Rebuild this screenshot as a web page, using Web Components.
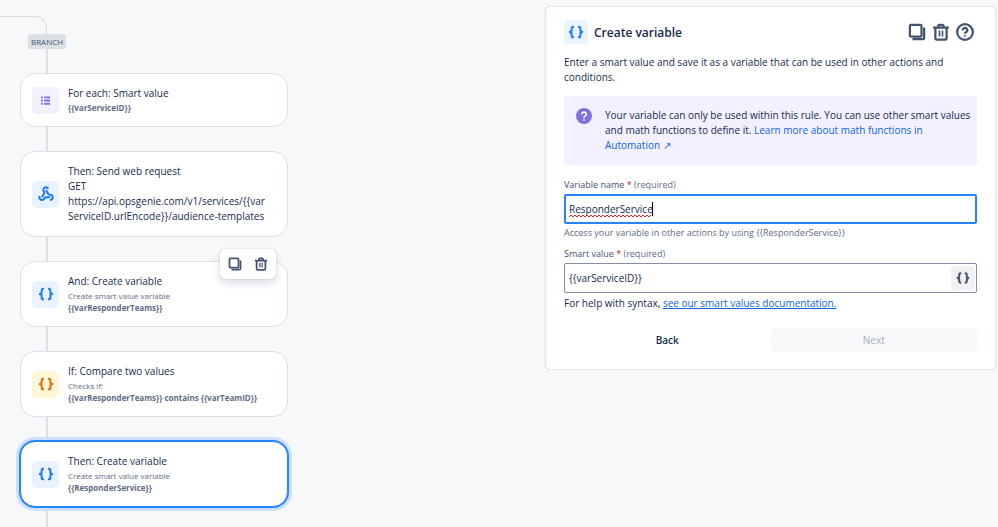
<!DOCTYPE html>
<html lang="en">
<head>
<meta charset="utf-8">
<meta name="viewport" content="width=device-width, initial-scale=1">
<title>Create variable</title>
<style>
  :root {
    --canvas: #f7f8fa;
    --line: #dcdfe4;
    --text: #172b4d;
    --subtle: #5e6c84;
    --icon: #44546f;
    --blue: #2684ff;
    --link: #0c66e4;
  }
  body {
    margin: 0;
    background: var(--canvas);
    color: var(--text);
    font: 10px/15px "Open Sans", "Noto Sans", sans-serif;
  }
</style>
</head>
<body>
<rule-editor></rule-editor>

<script>
const ICONS = {
  braces: '<path d="M9 4H8a2.500 2.500 0 0 0-2.500 2.500v3C5.500 11 4.500 12 1.500 12c3 0 4 1 4 2.500v3A2.500 2.500 0 0 0 8 20h1M15 4h1a2.500 2.500 0 0 1 2.500 2.500v3c0 1.500 1 2.500 4 2.500-3 0-4 1-4 2.500v3A2.500 2.500 0 0 1 16 20h-1"/>',
  list: '<path d="M2 5h4M2 12h4M2 19h4M9 5h13M9 12h13M9 19h13"/>',
  webhook: '<path d="M18 17h-6c-1.100 0-1.950.94-2.480 1.900A4 4 0 0 1 2 17c.01-.7.2-1.400.57-2M6 17l3.130-5.780c.53-.97.1-2.180-.5-3.100a4 4 0 1 1 6.890-4.060M12 6l3.130 5.730C15.660 12.700 16.900 13 18 13a4 4 0 0 1 0 8"/>',
  copy: '<rect x="2.500" y="2.500" width="15.500" height="15.500" rx="1.500"/><path d="M21.500 6v13.500a2 2 0 0 1-2 2H6"/>',
  trash: '<path d="M1.500 6h21M8.500 5.500V4a1.500 1.500 0 0 1 1.500-1.500h4A1.500 1.500 0 0 1 15.500 4v1.500M4.500 6v14a2 2 0 0 0 2 2h11a2 2 0 0 0 2-2V6"/><path stroke-width="2.200" d="M10 10v8M14 10v8"/>',
  help: '<circle cx="12" cy="12" r="10.500"/><path d="M9 9.800a3 3 0 1 1 4.500 2.400c-1 .6-1.500 1-1.500 2"/><path d="M12 16.300v1.800"/>',
  helpSolid: '<circle cx="12" cy="12" r="12" fill="currentColor" stroke="none"/><g stroke="#fff"><path d="M8.700 9.500a3.300 3.300 0 1 1 5 2.700c-1.200.7-1.700 1.100-1.700 2.300"/><path d="M12 17v2"/></g>'
};

class UiIcon extends HTMLElement {
  constructor() {
    super();
    this.attachShadow({ mode: 'open' });
  }
  connectedCallback() {
    this.shadowRoot.innerHTML = `
      <style>
        :host { display: block; flex: none; width: 16px; height: 16px; }
        svg { display: block; width: 100%; height: 100%; }
      </style>
      <svg viewBox="0 0 24 24" fill="none" stroke="currentColor" stroke-width="${this.getAttribute('weight') || 2.5}" aria-hidden="true">${ICONS[this.getAttribute('name')]}</svg>
    `;
  }
}
customElements.define('ui-icon', UiIcon);

class IconTile extends HTMLElement {
  constructor() {
    super();
    this.attachShadow({ mode: 'open' });
  }
  connectedCallback() {
    this.shadowRoot.innerHTML = `
      <style>
        :host {
          display: flex;
          flex: none;
          align-items: center;
          justify-content: center;
          width: var(--tile, 27px);
          height: var(--tile, 27px);
          border-radius: 5px;
          background: #e9f2ff;
          color: #1d7afc;
        }
        :host([tone="purple"]) { background: #f3f0ff; color: #8270db; }
        :host([tone="yellow"]) { background: #fff7d6; color: #e56910; }
        :host([tone="purple"]) ui-icon { width: 11px; height: 11px; }
      </style>
      <ui-icon name="${this.getAttribute('icon')}" weight="${this.getAttribute('weight') || 3}"></ui-icon>
    `;
  }
}
customElements.define('icon-tile', IconTile);

class IconButton extends HTMLElement {
  constructor() {
    super();
    this.attachShadow({ mode: 'open' });
  }
  connectedCallback() {
    this.shadowRoot.innerHTML = `
      <style>
        :host { display: block; }
        button {
          display: block;
          padding: 0;
          border: 0;
          background: none;
          color: var(--icon);
          cursor: pointer;
        }
        ui-icon { width: var(--size, 18px); height: var(--size, 18px); }
      </style>
      <button type="button" aria-label="${this.getAttribute('label')}"><ui-icon name="${this.getAttribute('icon')}" weight="3"></ui-icon></button>
    `;
  }
}
customElements.define('icon-button', IconButton);

// One card of the rule chain. Body goes in the default slot, hover actions in "tools".
class FlowStep extends HTMLElement {
  constructor() {
    super();
    this.attachShadow({ mode: 'open' });
  }
  connectedCallback() {
    this.shadowRoot.innerHTML = `
      <style>
        :host {
          position: relative;
          display: flex;
          align-items: center;
          gap: 9px;
          box-sizing: border-box;
          padding: 12px 18px 12px 11px;
          border: 1px solid var(--line);
          border-radius: 15px;
          background: #fff;
        }
        :host([selected]) {
          border-color: var(--blue);
          box-shadow: 0 0 0 1px var(--blue), 0 0 0 4px #cce0ff;
        }
        .text { min-width: 0; }
        h3 { margin: 0; font-size: 10px; font-weight: 400; line-height: 15px; }
        ::slotted(p) {
          margin: 1px 0 0;
          color: var(--subtle);
          font-size: 8px;
          line-height: 12px;
        }
        ::slotted(div) { word-break: break-all; }
        ::slotted(menu) {
          position: absolute;
          top: -13px;
          right: 11px;
          display: flex;
          gap: 12px;
          margin: 0;
          padding: 8px;
          border-radius: 5px;
          background: #fff;
          box-shadow: 0 4px 8px #091e4226, 0 0 1px #091e424f;
        }
      </style>
      <icon-tile icon="${this.getAttribute('icon')}" tone="${this.getAttribute('tone') || 'blue'}" weight="${this.getAttribute('weight') || 3}"></icon-tile>
      <div class="text">
        <h3>${this.getAttribute('heading')}</h3>
        <slot></slot>
      </div>
      <slot name="tools"></slot>
    `;
  }
}
customElements.define('flow-step', FlowStep);

class FlowLink extends HTMLElement {
  constructor() {
    super();
    this.attachShadow({ mode: 'open' });
    this.shadowRoot.innerHTML = `
      <style>
        :host { display: block; width: 2px; height: 24px; margin-left: 26px; background: var(--line); }
      </style>
    `;
  }
}
customElements.define('flow-link', FlowLink);

class FlowChain extends HTMLElement {
  constructor() {
    super();
    this.attachShadow({ mode: 'open' });
    this.shadowRoot.innerHTML = `
      <style>
        :host { display: block; flex: 0 1 288px; min-width: 0; }
        .curve {
          box-sizing: border-box;
          width: 47px;
          height: 18px;
          margin-top: 16px;
          border: solid var(--line);
          border-width: 1px 1px 0 0;
          border-top-right-radius: 12px;
        }
        .steps { padding-left: 20px; }
        .tag {
          display: block;
          width: fit-content;
          margin-left: 8px;
          padding: 0 3px;
          border-radius: 2px;
          background: var(--line);
          color: var(--icon);
          font-size: 8px;
          line-height: 15px;
        }
        b { font-weight: 700; }
        menu icon-button { --size: 14px; }
      </style>
      <div class="curve"></div>
      <div class="steps">
        <span class="tag">BRANCH</span>
        <flow-link></flow-link>
        <flow-step icon="list" tone="purple" weight="4" heading="For each: Smart value">
          <p><b>{{varServiceID}}</b></p>
        </flow-step>
        <flow-link></flow-link>
        <flow-step icon="webhook" heading="Then: Send web request">
          <div>GET<br>https://api.opsgenie.com/v1/services/{{varServiceID.urlEncode}}/audience-templates</div>
        </flow-step>
        <flow-link></flow-link>
        <flow-step icon="braces" heading="And: Create variable">
          <p>Create smart value variable<br><b>{{varResponderTeams}}</b></p>
          <menu slot="tools">
            <icon-button icon="copy" label="Duplicate step"></icon-button>
            <icon-button icon="trash" label="Delete step"></icon-button>
          </menu>
        </flow-step>
        <flow-link></flow-link>
        <flow-step icon="braces" tone="yellow" heading="If: Compare two values">
          <p>Checks if:<br><b>{{varResponderTeams}} contains {{varTeamID}}</b></p>
        </flow-step>
        <flow-link></flow-link>
        <flow-step icon="braces" heading="Then: Create variable" selected>
          <p>Create smart value variable<br><b>{{ResponderService}}</b></p>
        </flow-step>
        <flow-link></flow-link>
      </div>
    `;
  }
}
customElements.define('flow-chain', FlowChain);

class InfoBanner extends HTMLElement {
  constructor() {
    super();
    this.attachShadow({ mode: 'open' });
    this.shadowRoot.innerHTML = `
      <style>
        :host {
          display: flex;
          gap: 13px;
          padding: 12px 4px 12px 12px;
          border-radius: 2px;
          background: #f3f0ff;
        }
        ui-icon { color: #8270db; }
      </style>
      <ui-icon name="helpSolid"></ui-icon>
      <div><slot></slot></div>
    `;
  }
}
customElements.define('info-banner', InfoBanner);

class TextField extends HTMLElement {
  constructor() {
    super();
    this.attachShadow({ mode: 'open' });
  }
  connectedCallback() {
    // squiggle and caret of the field being edited
    const editing = `
      <svg class="squiggle" width="82" height="4" aria-hidden="true">
        <defs><pattern id="wave" width="4" height="4" patternUnits="userSpaceOnUse"><path d="M0 3l2-2 2 2" fill="none" stroke="#e5252a"/></pattern></defs>
        <rect width="82" height="4" fill="url(#wave)"/>
      </svg>
      <span class="caret"></span>`;
    this.shadowRoot.innerHTML = `
      <style>
        :host { display: block; }
        label { display: block; color: var(--icon); font-size: 9px; font-weight: 500; line-height: 12px; }
        label i { color: #ae2a19; font-style: normal; }
        label span { color: var(--subtle); font-weight: 400; }
        .box {
          position: relative;
          display: flex;
          align-items: center;
          height: 30px;
          box-sizing: border-box;
          margin: 3px 0;
          border: 1px solid #8590a2;
          border-radius: 2px;
          background: #fff;
        }
        :host([active]) .box { border: 2px solid var(--blue); }
        input {
          flex: 1;
          min-width: 0;
          padding: 0 0 0 4px;
          border: 0;
          outline: 0;
          background: none;
          color: inherit;
          font: inherit;
        }
        :host([active]) input { padding-left: 3px; }
        .squiggle { position: absolute; left: 3px; bottom: 4px; }
        .caret {
          position: absolute;
          left: 86px;
          width: 1px;
          height: 14px;
          background: #000;
        }
      </style>
      <label for="field">${this.getAttribute('label')}<i> *</i> <span>(required)</span></label>
      <div class="box">
        <input id="field" type="text" value="${this.getAttribute('value')}" spellcheck="false" required>
        ${this.hasAttribute('active') ? editing : ''}
        <slot name="action"></slot>
      </div>
      <slot></slot>
    `;
  }
}
customElements.define('text-field', TextField);

class VariablePanel extends HTMLElement {
  constructor() {
    super();
    this.attachShadow({ mode: 'open' });
    this.shadowRoot.innerHTML = `
      <style>
        :host {
          display: block;
          flex: 0 1 451px;
          min-width: 0;
          box-sizing: border-box;
          margin: 6px 2px;
          padding: 13px 18px 17px;
          border: 1px solid #e4e6ea;
          border-radius: 5px;
          background: #fff;
          box-shadow: 0 0 1px #091e4233;
        }
        header { display: flex; align-items: center; gap: 6px; padding-right: 3px; }
        header icon-tile { --tile: 24px; }
        h2 { flex: 1; margin: 0; padding-top: 2px; font-size: 12px; font-weight: 600; line-height: 16px; }
        .intro { margin: 11px 0; }
        a { color: var(--link); text-decoration: none; }
        form { margin-top: 14px; }
        .hint { margin: 0 0 9px; color: var(--subtle); font-size: 9px; line-height: 12px; }
        .syntax { margin: 0; }
        .syntax a { text-decoration: underline; }
        .insert {
          display: flex;
          align-items: center;
          justify-content: center;
          width: 24px;
          height: 24px;
          margin-right: 1px;
          padding: 0;
          border: 0;
          border-radius: 2px;
          background: #f1f2f4;
          color: var(--icon);
        }
        .insert ui-icon { width: 14px; height: 14px; }
        footer { display: flex; margin-top: 17px; }
        footer button {
          flex: 1;
          height: 24px;
          padding: 0;
          border: 0;
          border-radius: 2px;
          background: none;
          color: inherit;
          font: inherit;
          font-weight: 600;
        }
        footer button:disabled { background: #f7f8f9; color: #a5adba; font-weight: 500; }
      </style>
      <header>
        <icon-tile icon="braces"></icon-tile>
        <h2>Create variable</h2>
        <icon-button icon="copy" label="Duplicate"></icon-button>
        <icon-button icon="trash" label="Delete"></icon-button>
        <icon-button icon="help" label="Help"></icon-button>
      </header>
      <p class="intro">Enter a smart value and save it as a variable that can be used in other actions and conditions.</p>
      <info-banner>Your variable can only be used within this rule. You can use other smart values and math functions to define it. <a href="#math">Learn more about math functions in Automation ↗</a></info-banner>
      <form>
        <text-field label="Variable name" value="ResponderService" active>
          <p class="hint">Access your variable in other actions by using {{ResponderService}}</p>
        </text-field>
        <text-field label="Smart value" value="{{varServiceID}}">
          <button slot="action" class="insert" type="button" aria-label="Insert smart value"><ui-icon name="braces" weight="3.5"></ui-icon></button>
          <p class="syntax">For help with syntax, <a href="#docs">see our smart values documentation.</a></p>
        </text-field>
        <footer>
          <button type="button">Back</button>
          <button type="submit" disabled>Next</button>
        </footer>
      </form>
    `;
  }
}
customElements.define('variable-panel', VariablePanel);

class RuleEditor extends HTMLElement {
  constructor() {
    super();
    this.attachShadow({ mode: 'open' });
    this.shadowRoot.innerHTML = `
      <style>
        :host { display: flex; align-items: flex-start; justify-content: space-between; gap: 24px; }
      </style>
      <flow-chain></flow-chain>
      <variable-panel></variable-panel>
    `;
  }
}
customElements.define('rule-editor', RuleEditor);
</script>
</body>
</html>
